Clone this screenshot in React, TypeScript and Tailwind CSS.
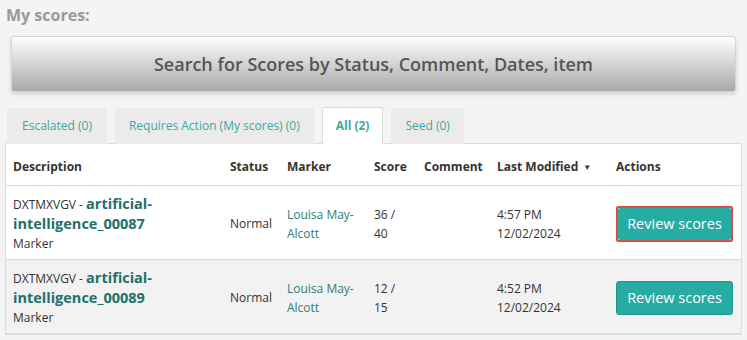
import React from "react";

const rows = [
  { id: "00087", score: ["36 /", "40"], time: "4:57 PM", highlight: true, bg: "bg-white" },
  { id: "00089", score: ["12 /", "15"], time: "4:52 PM", highlight: false, bg: "bg-[#f2f2f2]" },
];

const cols = "grid grid-cols-[217px_57px_87px_50px_73px_119px_1fr]";

export default function App() {
  return (
    <div className="w-[747px] h-[340px] overflow-hidden bg-[#f4f4f4] text-[#333] font-['Open_Sans',sans-serif]">
      <h2 className="pl-[6px] pt-[5px] text-[16px] leading-[20px] font-bold text-[#9a9a9a]">My scores:</h2>

      <div className="mx-[11px] mt-[11px] h-[56px] rounded-[3px] border border-[#d4d4d4] bg-gradient-to-b from-white to-[#a9a9a9] shadow-[0_2px_4px_rgba(0,0,0,0.15)] flex items-center justify-center">
        <span className="text-[18px] font-semibold text-[#555]">Search for Scores by Status, Comment, Dates, item</span>
      </div>

      <div className="mt-[16px] ml-[7px] flex gap-[8px] text-[12px] relative z-10">
        <div className="h-[36px] px-[15px] flex items-center rounded-t-[3px] bg-[#ebebeb] text-[#3aa9a1]">Escalated (0)</div>
        <div className="h-[36px] px-[14px] flex items-center rounded-t-[3px] bg-[#ebebeb] text-[#3aa9a1]">Requires Action (My scores) (0)</div>
        <div className="h-[37px] -mt-px px-[13px] flex items-center rounded-t-[3px] bg-white border border-b-0 border-[#dcdcdc] text-[#3aa9a1] font-bold">All (2)</div>
        <div className="h-[36px] px-[14px] flex items-center rounded-t-[3px] bg-[#ebebeb] text-[#3aa9a1]">Seed (0)</div>
      </div>

      <div className="ml-[5px] w-[737px] -mt-px border border-[#dcdcdc] bg-white">
        <div className={`${cols} h-[42px] pt-[5px] items-center border-b border-[#dcdcdc] text-[12px] font-bold text-[#333]`}>
          <div className="pl-[7px]">Description</div>
          <div className="pl-[7px]">Status</div>
          <div className="pl-[7px]">Marker</div>
          <div className="pl-[7px]">Score</div>
          <div className="pl-[7px]">Comment</div>
          <div className="pl-[7px] flex items-center gap-[5px]">
            Last Modified
            <span className="text-[8px] leading-none">▼</span>
          </div>
          <div className="pl-[7px]">Actions</div>
        </div>

        {rows.map((r) => (
          <div key={r.id} className={`${cols} h-[74px] pt-[2px] items-center border-b border-[#dcdcdc] text-[12px] ${r.bg}`}>
            <div className="pl-[7px] leading-[19px]">
              <div>
                DXTMXVGV - <span className="text-[14.5px] font-bold text-[#22706a]">artificial-</span>
              </div>
              <div className="text-[14.5px] font-bold text-[#22706a] leading-[20px]">intelligence_{r.id}</div>
              <div>Marker</div>
            </div>
            <div className="pl-[7px]">Normal</div>
            <div className="pl-[7px] leading-[19px] text-[#2b7f78]">
              Louisa May-
              <br />
              Alcott
            </div>
            <div className="pl-[7px] leading-[19px]">
              {r.score[0]}
              <br />
              {r.score[1]}
            </div>
            <div className="pl-[7px]"></div>
            <div className="pl-[7px] leading-[19px]">
              {r.time}
              <br />
              12/02/2024
            </div>
            <div className="pl-[7px]">
              {r.highlight ? (
                <div className="inline-flex border-[2px] border-[#dc4b46] rounded-[2px]">
                  <button className="h-[32px] w-[113px] bg-[#27aca4] text-white text-[14.5px] rounded-[2px]">Review scores</button>
                </div>
              ) : (
                <button className="h-[34px] w-[117px] bg-[#27aca4] border border-[#22978f] text-white text-[14.5px] rounded-[3px]">
                  Review scores
                </button>
              )}
            </div>
          </div>
        ))}
      </div>
    </div>
  );
}
